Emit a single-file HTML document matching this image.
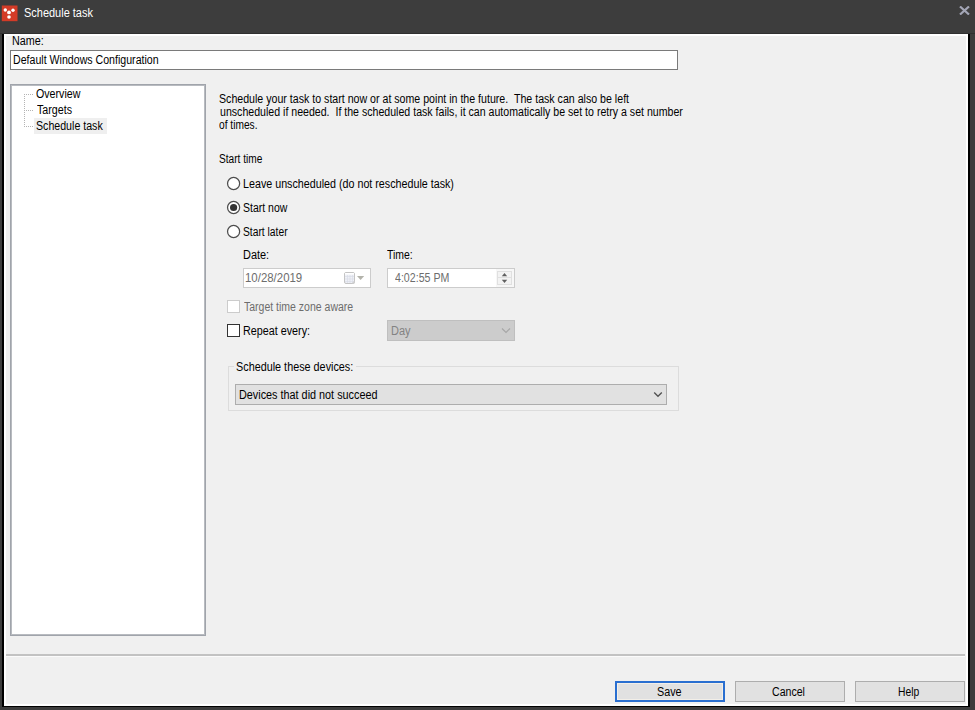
<!DOCTYPE html>
<html><head><meta charset="utf-8">
<style>
html,body{margin:0;padding:0;}
body{width:975px;height:710px;position:relative;overflow:hidden;background:#3d3d3d;font-family:"Liberation Sans",sans-serif;font-size:12px;color:#000;}
.a{position:absolute;box-sizing:border-box;}
.t{position:absolute;white-space:pre;line-height:13px;font-size:12px;transform-origin:0 0;}
</style></head><body>
<!-- title bar -->
<svg class="a" style="left:0px;top:0px" width="20" height="23" viewBox="0 0 20 23">
<rect x="1.8" y="5.5" width="15.7" height="15.7" fill="#d33b27"/>
<g stroke="#b02a18" stroke-width="0.8" fill="none"><path d="M5.3 10 L9 12.3 L13 10.2 M9 12.3 L9 17"/></g>
<g fill="#fff"><circle cx="5.3" cy="10" r="1.7"/><circle cx="13" cy="10.2" r="1.7"/><circle cx="9" cy="12.4" r="1.9"/><circle cx="9" cy="17" r="1.8"/></g>
</svg>
<svg class="a" style="left:959px;top:6px" width="11" height="9" viewBox="0 0 11 9"><path d="M1 0.5 L10 8.5 M10 0.5 L1 8.5" stroke="#a3a6b6" stroke-width="2.2"/></svg>

<!-- dialog frame -->
<div class="a" style="left:0px;top:33px;width:975px;height:1px;background:#303030;"></div>
<div class="a" style="left:2px;top:34px;width:968px;height:673px;background:#000;"></div>
<div class="a" style="left:4px;top:34px;width:964px;height:672px;background:#fff;"></div>
<div class="a" style="left:6px;top:36px;width:960px;height:668px;background:#f0f0f0;"></div>

<div class="a" style="left:10px;top:50px;width:668px;height:20px;border:1px solid #7a7a7a;background:#fff;"></div>

<!-- tree -->
<div class="a" style="left:10px;top:84px;width:196px;height:552px;border:1px solid #a0a4ab;box-shadow:inset 0 0 0 1px #b8bbc0;background:#fff;"></div>
<svg class="a" style="left:24px;top:94px" width="12" height="34">
<path d="M0.5 0 V33" stroke="#b4b4b4" stroke-width="1" stroke-dasharray="1 1"/>
<path d="M0 0.5 H10 M0 16.5 H10 M0 32.5 H10" stroke="#b4b4b4" stroke-width="1" stroke-dasharray="1 1"/>
</svg>
<div class="a" style="left:34px;top:118px;width:73px;height:16px;background:#efefef;"></div>

<!-- radios -->
<svg class="a" style="left:220px;top:170px" width="30" height="75" viewBox="0 0 30 75">
<g fill="#fff" stroke="#4d4d4d" stroke-width="1.25">
<circle cx="13.6" cy="13.5" r="6.05"/>
<circle cx="13.6" cy="37.5" r="6.05"/>
<circle cx="13.6" cy="61.5" r="6.05"/>
</g>
<circle cx="13.6" cy="37.5" r="3.6" fill="#333"/>
</svg>

<div class="a" style="left:243px;top:268px;width:128px;height:20px;border:1px solid #cccccc;background:#fff;"></div>
<div class="a" style="left:387px;top:268px;width:128px;height:20px;border:1px solid #cccccc;background:#fff;"></div>

<div class="a" style="left:227px;top:300px;width:13px;height:13px;border:1px solid #cccccc;background:#fff;"></div>
<div class="a" style="left:227px;top:324px;width:13px;height:13px;border:1px solid #333;background:#fff;"></div>
<div class="a" style="left:387px;top:320px;width:128px;height:21px;border:1px solid #bfbfbf;background:#cccccc;"></div>

<!-- date picker icons -->
<svg class="a" style="left:343px;top:271px" width="24" height="14" viewBox="0 0 24 14">
<rect x="1.5" y="1.5" width="10" height="11" rx="1.5" fill="#eef0f6" stroke="#c4c4c4" stroke-width="1"/>
<rect x="2" y="2" width="9" height="1.5" fill="#fff"/>
<g stroke="#d6dae6" stroke-width="0.6"><path d="M2 5.5 H11 M2 8 H11 M2 10.5 H11 M4.5 4 V12 M7 4 V12 M9.5 4 V12"/></g>
<path d="M8.5 12.5 L11.5 9.5 L11.5 12.5 Z" fill="#d0d0d0"/>
<path d="M14 5 L21.2 5 L17.6 9 Z" fill="#b3b3ab"/>
</svg>
<!-- spin -->
<div class="a" style="left:496px;top:269px;width:18px;height:18px;background:#f7f7f7;"></div>
<div class="a" style="left:497px;top:271px;width:15px;height:14px;border:1px solid #e0e0e0;background:#f3f3f3;"></div>
<div class="a" style="left:498px;top:277px;width:13px;height:1px;background:#e0e0e0;"></div>
<svg class="a" style="left:497px;top:271px" width="15" height="14" viewBox="0 0 15 14">
<path d="M4.8 5.2 L10.2 5.2 L7.5 2 Z" fill="#606060"/>
<path d="M4.8 8.8 L10.2 8.8 L7.5 12 Z" fill="#606060"/>
</svg>
<!-- day chevron -->
<svg class="a" style="left:500px;top:326px" width="12" height="9" viewBox="0 0 12 9"><path d="M2 2.5 L6 6.5 L10 2.5" stroke="#a6a6a6" stroke-width="1.1" fill="none"/></svg>
<!-- group -->
<div class="a" style="left:228px;top:366px;width:451px;height:45px;border:1px solid #dcdcdc;"></div>
<div class="a" style="left:234px;top:360px;width:122px;height:12px;background:#f0f0f0;"></div>
<div class="a" style="left:235px;top:384px;width:432px;height:21px;border:1px solid #adadad;background:#e1e1e1;"></div>

<!-- devices chevron -->
<svg class="a" style="left:652px;top:390px" width="12" height="9" viewBox="0 0 12 9"><path d="M2.2 2.5 L6 6.3 L9.8 2.5" stroke="#505050" stroke-width="1.3" fill="none"/></svg>
<!-- separator -->
<div class="a" style="left:6px;top:654px;width:959px;height:2px;background:#c2c2c2;"></div>
<div class="a" style="left:6px;top:656px;width:959px;height:1px;background:#fbfbfb;"></div>

<!-- buttons -->
<div class="a" style="left:615px;top:681px;width:110px;height:21px;border:2px solid #2a6fd0;background:#e1e1e1;box-shadow:inset 0 0 0 1px #f3efe8;"></div>
<div class="a" style="left:735px;top:681px;width:110px;height:21px;border:1px solid #adadad;background:#e1e1e1;"></div>
<div class="a" style="left:855px;top:681px;width:110px;height:21px;border:1px solid #adadad;background:#e1e1e1;"></div>
<div class="t" style="left:23.99px;top:7px;transform:scaleX(0.9147);color:#fff;">Schedule task</div>
<div class="t" style="left:12.3px;top:35px;transform:scaleX(0.8971);">Name:</div>
<div class="t" style="left:13.22px;top:54px;transform:scaleX(0.884);">Default Windows Configuration</div>
<div class="t" style="left:36.1px;top:88px;transform:scaleX(0.888);">Overview</div>
<div class="t" style="left:36.8px;top:104px;transform:scaleX(0.8897);">Targets</div>
<div class="t" style="left:36.01px;top:120px;transform:scaleX(0.8853);">Schedule task</div>
<div class="t" style="left:218.82px;top:93px;transform:scaleX(0.8849);">Schedule your task to start now or at some point in the future.  The task can also be left</div>
<div class="t" style="left:219.7px;top:106px;transform:scaleX(0.8828);">unscheduled if needed.  If the scheduled task fails, it can automatically be set to retry a set number</div>
<div class="t" style="left:219.2px;top:119px;transform:scaleX(0.8489);">of times.</div>
<div class="t" style="left:219.06px;top:153px;transform:scaleX(0.844);">Start time</div>
<div class="t" style="left:242.71px;top:178px;transform:scaleX(0.8932);">Leave unscheduled (do not reschedule task)</div>
<div class="t" style="left:242.73px;top:202px;transform:scaleX(0.874);">Start now</div>
<div class="t" style="left:243.14px;top:226px;transform:scaleX(0.8569);">Start later</div>
<div class="t" style="left:243.09px;top:249px;transform:scaleX(0.9111);">Date:</div>
<div class="t" style="left:387.3px;top:249px;transform:scaleX(0.869);">Time:</div>
<div class="t" style="left:245.25px;top:272px;transform:scaleX(0.9525);color:#6d6d6d;">10/28/2019</div>
<div class="t" style="left:395.2px;top:272px;transform:scaleX(0.8852);color:#6d6d6d;">4:02:55 PM</div>
<div class="t" style="left:243.8px;top:301px;transform:scaleX(0.8752);color:#6d6d6d;">Target time zone aware</div>
<div class="t" style="left:242.9px;top:325px;transform:scaleX(0.8973);">Repeat every:</div>
<div class="t" style="left:390.98px;top:325px;transform:scaleX(0.915);color:#838383;">Day</div>
<div class="t" style="left:236.2px;top:361px;transform:scaleX(0.9016);">Schedule these devices:</div>
<div class="t" style="left:238.8px;top:389px;transform:scaleX(0.9026);">Devices that did not succeed</div>
<div class="t" style="left:656.5px;top:686px;transform:scaleX(0.9);">Save</div>
<div class="t" style="left:772.3px;top:686px;transform:scaleX(0.8811);">Cancel</div>
<div class="t" style="left:897.84px;top:686px;transform:scaleX(0.8583);">Help</div>
</body></html>
